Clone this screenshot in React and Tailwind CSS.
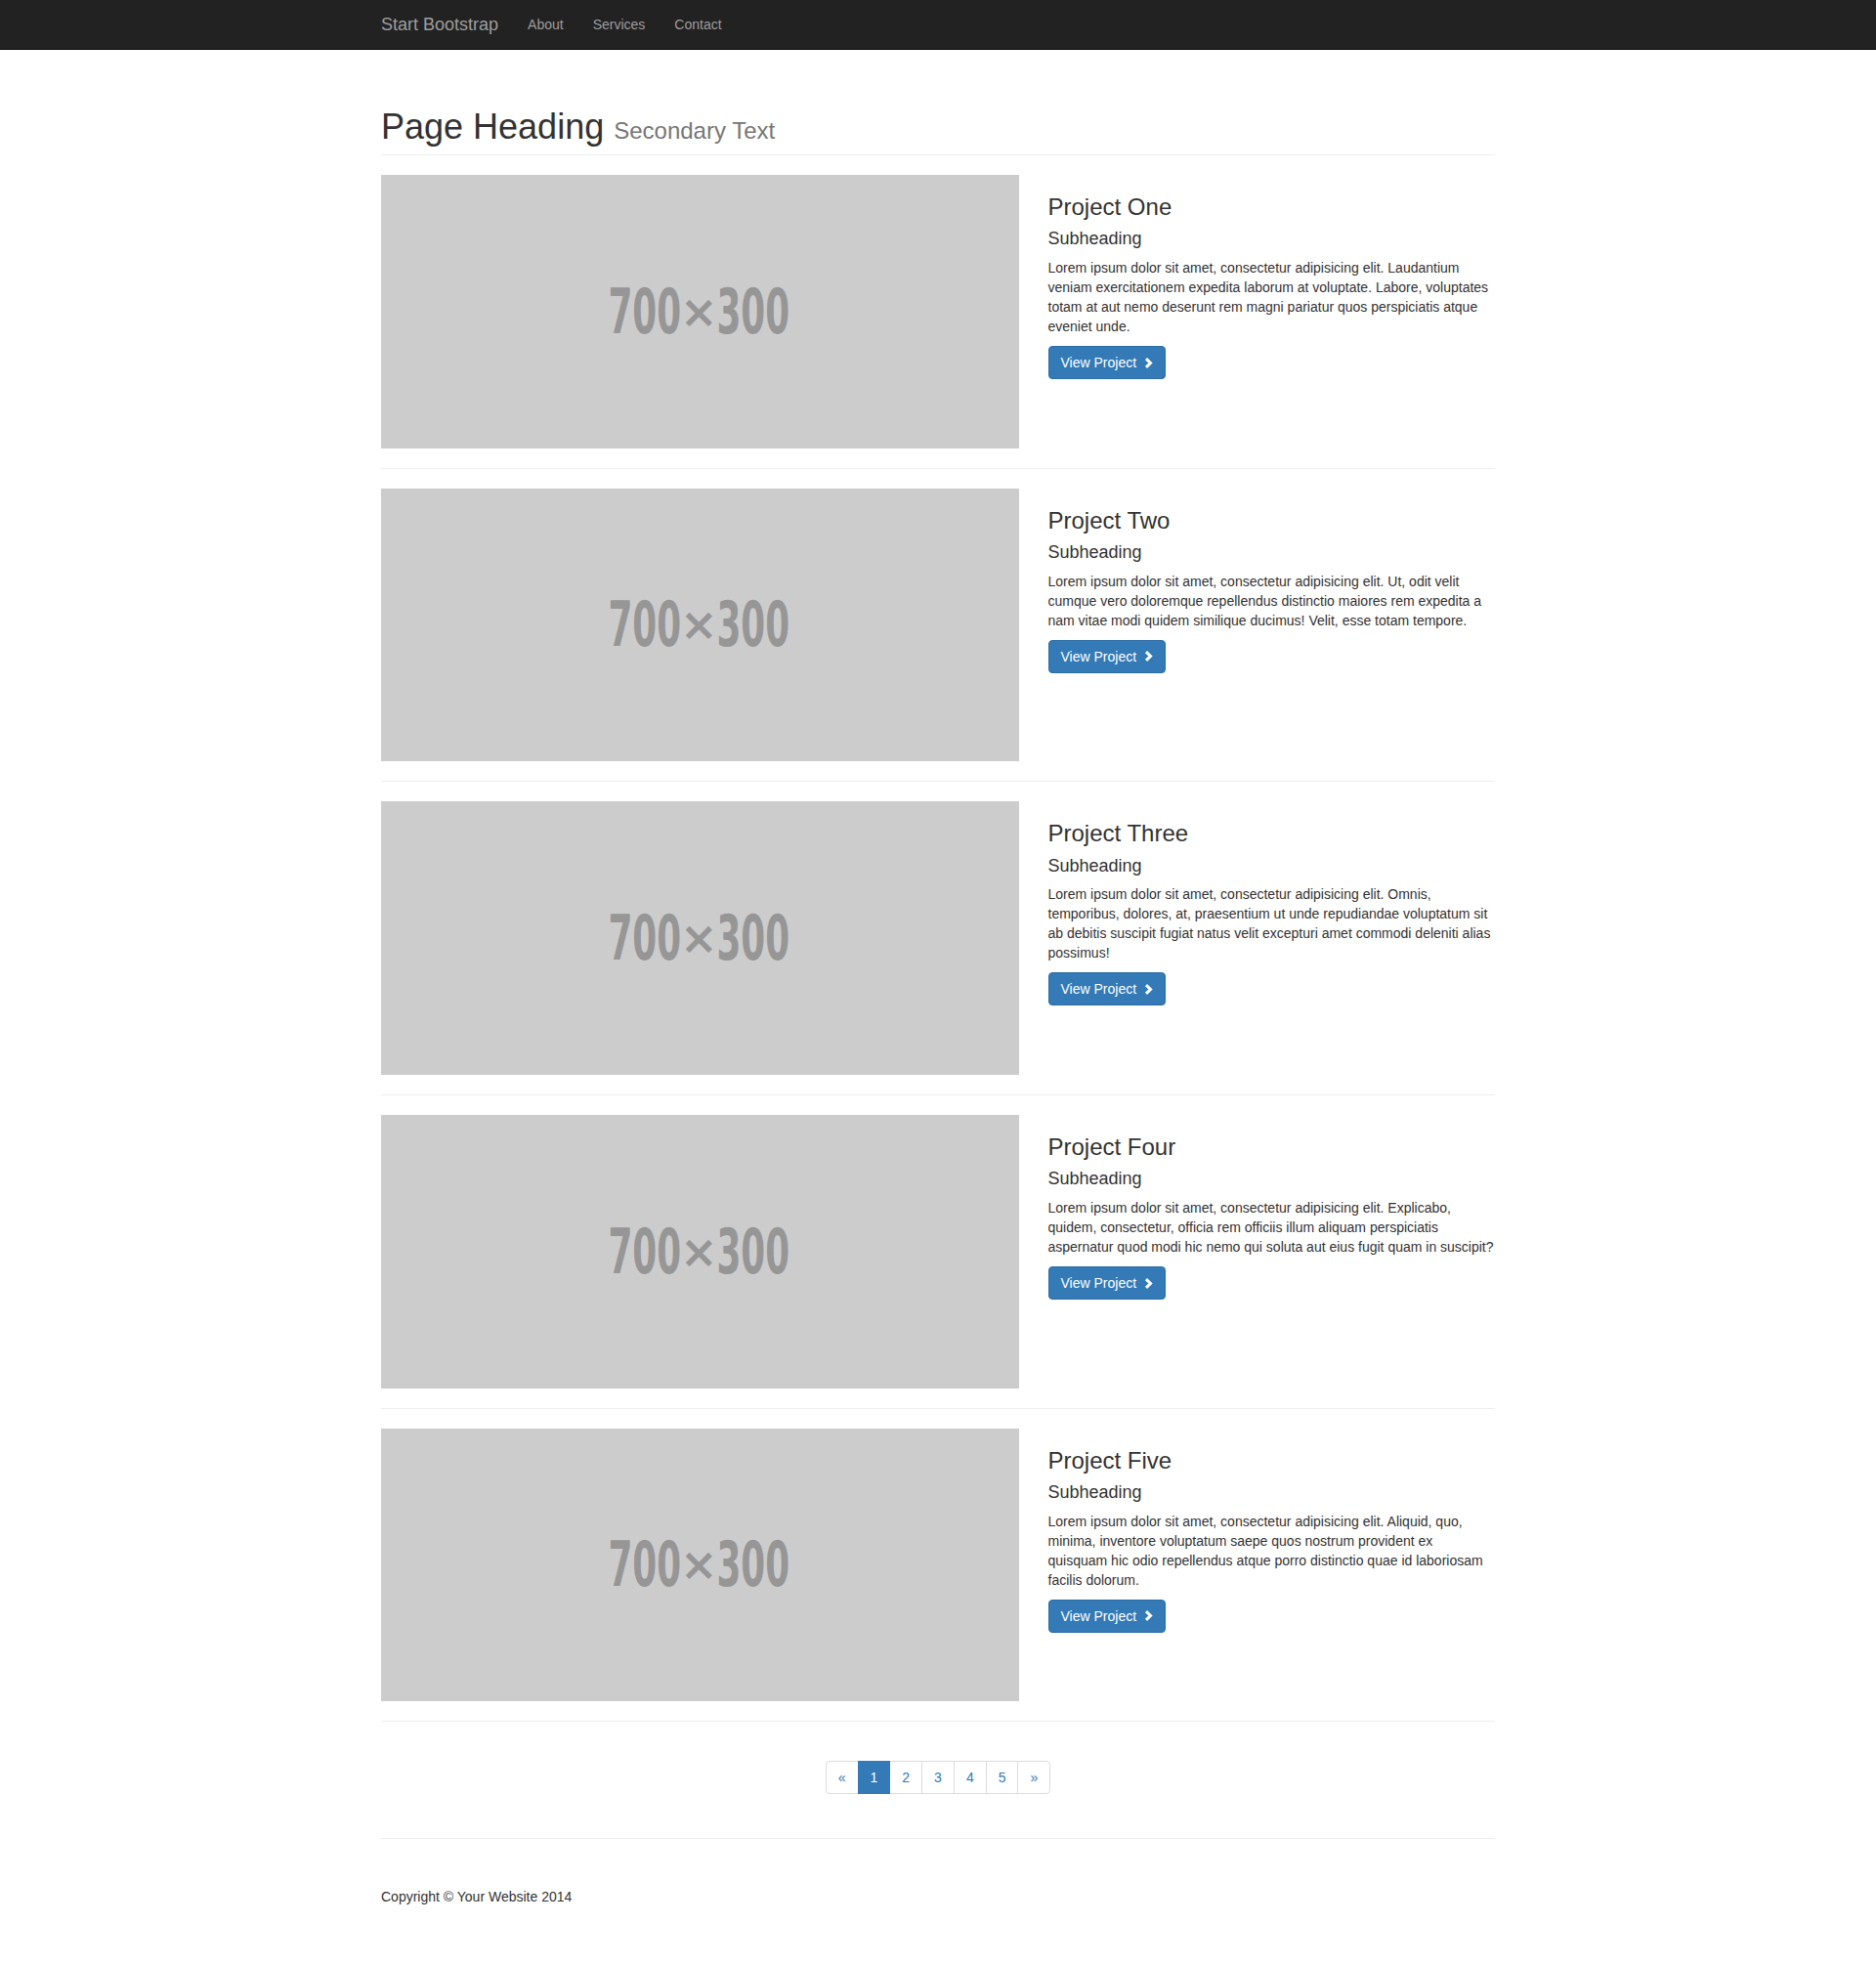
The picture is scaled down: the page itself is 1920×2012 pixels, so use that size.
import React from 'react'

const projects = [
  {
    title: 'Project One',
    text: 'Lorem ipsum dolor sit amet, consectetur adipisicing elit. Laudantium veniam exercitationem expedita laborum at voluptate. Labore, voluptates totam at aut nemo deserunt rem magni pariatur quos perspiciatis atque eveniet unde.',
  },
  {
    title: 'Project Two',
    text: 'Lorem ipsum dolor sit amet, consectetur adipisicing elit. Ut, odit velit cumque vero doloremque repellendus distinctio maiores rem expedita a nam vitae modi quidem similique ducimus! Velit, esse totam tempore.',
  },
  {
    title: 'Project Three',
    text: 'Lorem ipsum dolor sit amet, consectetur adipisicing elit. Omnis, temporibus, dolores, at, praesentium ut unde repudiandae voluptatum sit ab debitis suscipit fugiat natus velit excepturi amet commodi deleniti alias possimus!',
  },
  {
    title: 'Project Four',
    text: 'Lorem ipsum dolor sit amet, consectetur adipisicing elit. Explicabo, quidem, consectetur, officia rem officiis illum aliquam perspiciatis aspernatur quod modi hic nemo qui soluta aut eius fugit quam in suscipit?',
  },
  {
    title: 'Project Five',
    text: 'Lorem ipsum dolor sit amet, consectetur adipisicing elit. Aliquid, quo, minima, inventore voluptatum saepe quos nostrum provident ex quisquam hic odio repellendus atque porro distinctio quae id laboriosam facilis dolorum.',
  },
]

function Chevron() {
  return (
    <svg width="9" height="11" viewBox="0 0 9 11" className="ml-[8px] inline-block">
      <polyline points="2,1.2 6.5,5.5 2,9.8" fill="none" stroke="white" strokeWidth="3" strokeLinejoin="miter" />
    </svg>
  )
}

function Digits({ children }) {
  return (
    <span className="w-[76px] flex justify-center">
      <span className="font-bold text-[64px] leading-none scale-x-[0.56] whitespace-nowrap">{children}</span>
    </span>
  )
}

function Placeholder() {
  return (
    <div className="w-[652.5px] h-[279.64px] shrink-0 bg-[#cccccc] flex items-center justify-center overflow-hidden font-['DejaVu_Sans',sans-serif] text-[#969696]">
      <div className="flex items-center ml-[-2px]">
        <Digits>700</Digits>
        <span className="mx-[-2px] text-[46px] leading-none font-bold">×</span>
        <Digits>300</Digits>
      </div>
    </div>
  )
}

function Project({ p }) {
  return (
    <>
      <div className="flex gap-[30px]">
        <Placeholder />
        <div className="flex-1 pt-[20px]">
          <h3 className="text-[24px] leading-[26.4px] font-normal">{p.title}</h3>
          <h4 className="mt-[10px] text-[18px] leading-[19.8px] font-normal">Subheading</h4>
          <p className="mt-[9px] mb-[10px]">{p.text}</p>
          <a className="inline-flex items-center px-[12px] py-[6px] border border-[#2e6da4] bg-[#337ab7] text-white rounded-[4px] leading-[20px]">
            View Project
            <Chevron />
          </a>
        </div>
      </div>
      <hr className="my-[20px] border-[#eeeeee]" />
    </>
  )
}

export default function App() {
  const pages = ['«', '1', '2', '3', '4', '5', '»']
  return (
    <div className="font-['Liberation_Sans',Arial,sans-serif] text-[14px] leading-[20px] text-[#333333] bg-white">
      <nav className="h-[51px] bg-[#222222] border-b border-[#080808]">
        <div className="w-[1170px] mx-auto px-[15px] h-[50px] flex items-center">
          <a className="text-[18px] leading-[20px] text-[#9d9d9d] pr-[15px]">Start Bootstrap</a>
          <ul className="flex">
            {['About', 'Services', 'Contact'].map(l => (
              <li key={l}>
                <a className="block px-[15px] text-[#9d9d9d]">{l}</a>
              </li>
            ))}
          </ul>
        </div>
      </nav>

      <div className="w-[1170px] mx-auto px-[15px] pt-[59px]">
        <h1 className="h-[49px] pb-[9px] mb-[20px] border-b border-[#eeeeee] text-[36px] leading-[39px] font-normal whitespace-nowrap">
          Page Heading <small className="text-[24px] leading-none text-[#777777]">Secondary Text</small>
        </h1>

        {projects.map(p => (
          <Project key={p.title} p={p} />
        ))}

        <div className="pt-[20px] flex justify-center">
          <ul className="flex">
            {pages.map((pg, i) => (
              <li key={pg}>
                <a
                  className={
                    'block px-[12px] py-[6px] border leading-[20px] ' +
                    (i > 0 ? '-ml-px ' : '') +
                    (i === 0 ? 'rounded-l-[4px] ' : '') +
                    (i === pages.length - 1 ? 'rounded-r-[4px] ' : '') +
                    (pg === '1'
                      ? 'bg-[#337ab7] border-[#337ab7] text-white relative'
                      : 'bg-white border-[#dddddd] text-[#337ab7]')
                  }
                >
                  {pg}
                </a>
              </li>
            ))}
          </ul>
        </div>

        <hr className="mt-[45px] border-[#eeeeee]" />
        <footer className="pt-[49px] pb-[61px]">
          <p>Copyright © Your Website 2014</p>
        </footer>
      </div>
    </div>
  )
}
